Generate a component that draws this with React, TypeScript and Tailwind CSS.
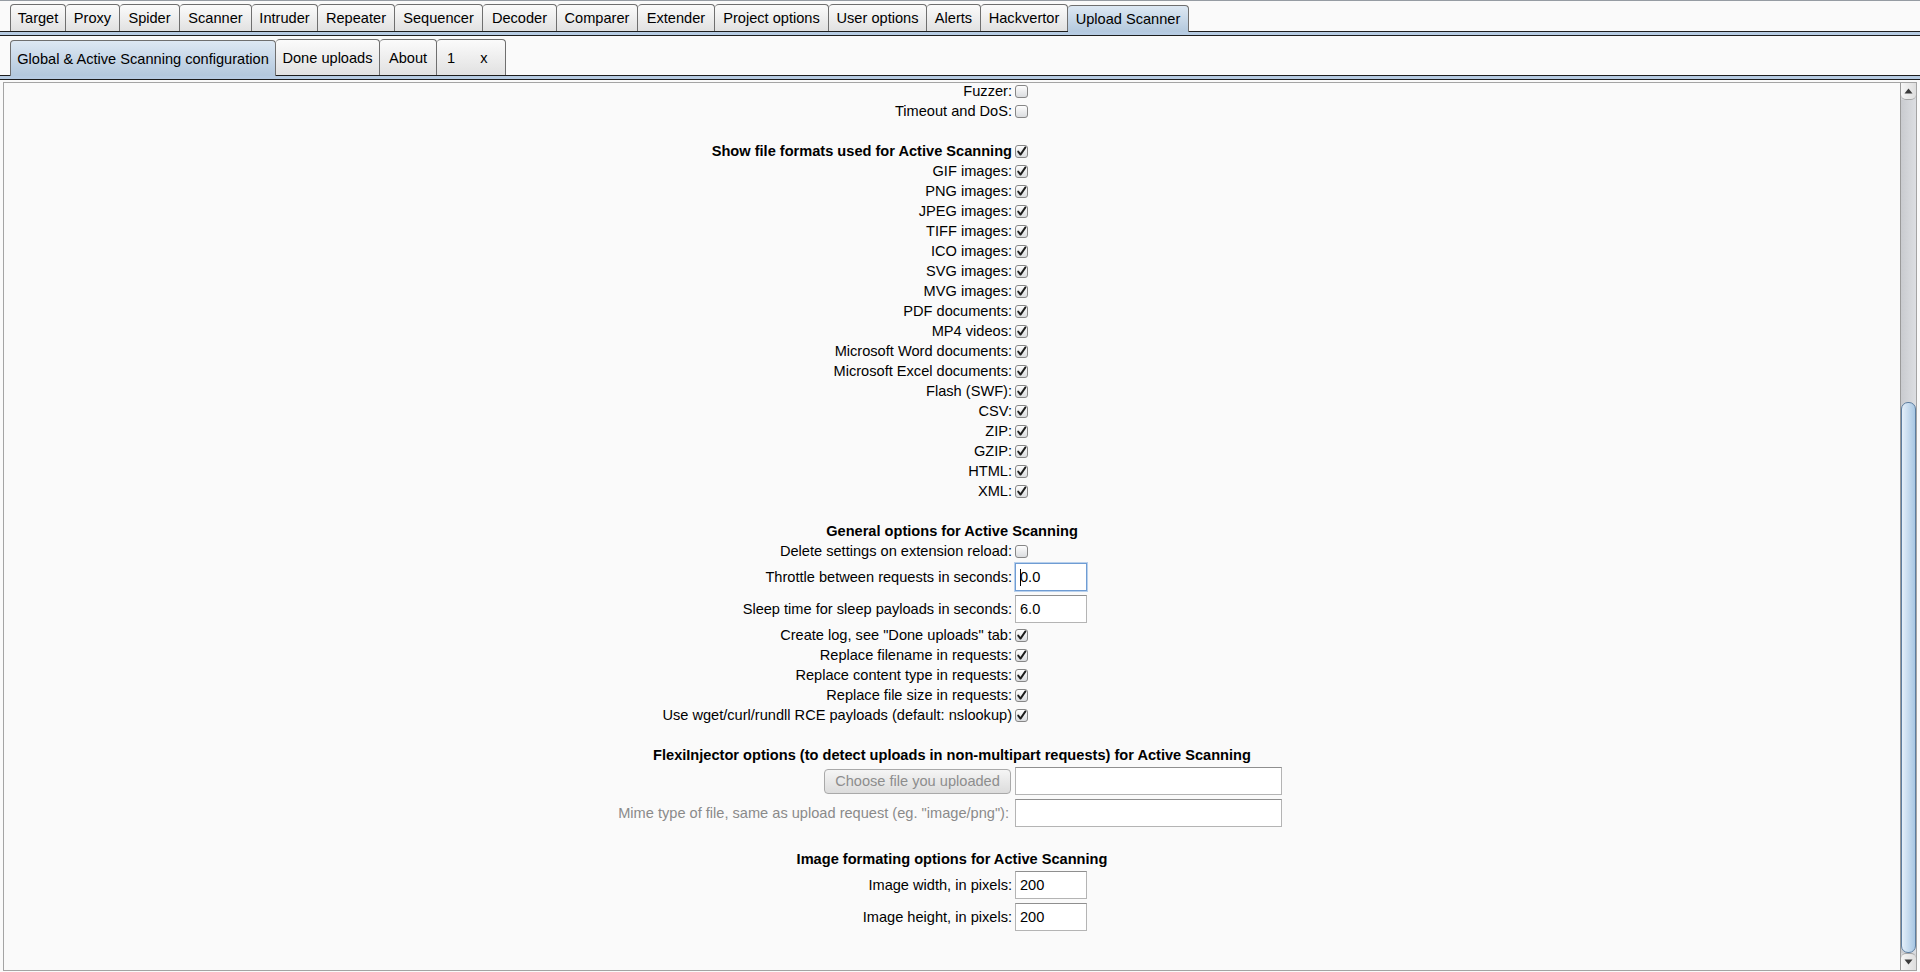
import React from "react";

type Row =
  | { kind: "check"; label: string; checked: boolean; bold?: boolean }
  | { kind: "blank" }
  | { kind: "header"; label: string }
  | { kind: "field"; label: string; value: string; focused?: boolean }
  | { kind: "file" }
  | { kind: "mime" };

const TOP_TABS = [
  { label: "Target", w: "w-[56px]" },
  { label: "Proxy", w: "w-[54px]" },
  { label: "Spider", w: "w-[60px]" },
  { label: "Scanner", w: "w-[72px]" },
  { label: "Intruder", w: "w-[66px]" },
  { label: "Repeater", w: "w-[77px]" },
  { label: "Sequencer", w: "w-[88px]" },
  { label: "Decoder", w: "w-[74px]" },
  { label: "Comparer", w: "w-[81px]" },
  { label: "Extender", w: "w-[77px]" },
  { label: "Project options", w: "w-[114px]" },
  { label: "User options", w: "w-[98px]" },
  { label: "Alerts", w: "w-[54px]" },
  { label: "Hackvertor", w: "w-[87px]" },
  { label: "Upload Scanner", w: "w-[121px]", active: true },
];

const SUB_TABS = [
  { label: "Global & Active Scanning configuration", w: "w-[266px]", active: true },
  { label: "Done uploads", w: "w-[104px]" },
  { label: "About", w: "w-[57px]" },
];

const FORMATS = [
  "GIF images:",
  "PNG images:",
  "JPEG images:",
  "TIFF images:",
  "ICO images:",
  "SVG images:",
  "MVG images:",
  "PDF documents:",
  "MP4 videos:",
  "Microsoft Word documents:",
  "Microsoft Excel documents:",
  "Flash (SWF):",
  "CSV:",
  "ZIP:",
  "GZIP:",
  "HTML:",
  "XML:",
];

const ROWS: Row[] = [
  { kind: "check", label: "Fuzzer:", checked: false },
  { kind: "check", label: "Timeout and DoS:", checked: false },
  { kind: "blank" },
  { kind: "check", label: "Show file formats used for Active Scanning", checked: true, bold: true },
  ...FORMATS.map((f) => ({ kind: "check" as const, label: f, checked: true })),
  { kind: "blank" },
  { kind: "header", label: "General options for Active Scanning" },
  { kind: "check", label: "Delete settings on extension reload:", checked: false },
  { kind: "field", label: "Throttle between requests in seconds:", value: "0.0", focused: true },
  { kind: "field", label: "Sleep time for sleep payloads in seconds:", value: "6.0" },
  { kind: "check", label: 'Create log, see "Done uploads" tab:', checked: true },
  { kind: "check", label: "Replace filename in requests:", checked: true },
  { kind: "check", label: "Replace content type in requests:", checked: true },
  { kind: "check", label: "Replace file size in requests:", checked: true },
  { kind: "check", label: "Use wget/curl/rundll RCE payloads (default: nslookup)", checked: true },
  { kind: "blank" },
  { kind: "header", label: "FlexiInjector options (to detect uploads in non-multipart requests) for Active Scanning" },
  { kind: "file" },
  { kind: "mime" },
  { kind: "blank" },
  { kind: "header", label: "Image formating options for Active Scanning" },
  { kind: "field", label: "Image width, in pixels:", value: "200" },
  { kind: "field", label: "Image height, in pixels:", value: "200" },
];

function Tab({
  label,
  w,
  h,
  active,
  first,
  children,
}: {
  label?: string;
  w: string;
  h: string;
  active?: boolean;
  first?: boolean;
  children?: React.ReactNode;
}) {
  return (
    <div
      className={`${w} ${h} shrink-0 flex items-center justify-center whitespace-nowrap border-t border-r border-[#6f6f6f] rounded-t-[4px] ${
        first ? "border-l" : ""
      } ${
        active
          ? "relative z-10 -mb-px bg-linear-to-b from-[#dde8f3] to-[#b3c8dd]"
          : "bg-linear-to-b from-[#fbfbfb] to-[#e1e1e1]"
      }`}
    >
      {children ?? label}
    </div>
  );
}

function CheckBox({ checked }: { checked: boolean }) {
  return (
    <svg width="13" height="13" viewBox="0 0 13 13" className="shrink-0">
      <defs>
        <linearGradient id="cbfill" x1="0" y1="0" x2="0" y2="1">
          <stop offset="0" stopColor="#ffffff" />
          <stop offset="1" stopColor="#d9dbde" />
        </linearGradient>
      </defs>
      <rect x="0.5" y="0.5" width="12" height="12" rx="2.5" fill="url(#cbfill)" stroke="#868686" />
      {checked && (
        <path
          d="M3.2 6.6 L5.5 9.6 L10.4 2.4"
          fill="none"
          stroke="#1c1c1c"
          strokeWidth="1.9"
          strokeLinecap="round"
          strokeLinejoin="round"
        />
      )}
    </svg>
  );
}

function TextField({ value, focused, wide }: { value: string; focused?: boolean; wide?: boolean }) {
  return (
    <div
      className={`${wide ? "w-[267px]" : "w-[72px]"} h-[28px] ml-px flex items-center pl-[4px] bg-white border ${
        focused
          ? "border-[#6f9cd3] shadow-[0_0_0_1px_#b8d0ec]"
          : "border-[#b4b4b4] border-t-[#8f8f8f]"
      }`}
    >
      {focused && <span className="w-px h-[17px] bg-black" />}
      <span className={focused ? "-ml-px" : ""}>{value}</span>
    </div>
  );
}

function Label({ children, bold, muted, pr }: { children: React.ReactNode; bold?: boolean; muted?: boolean; pr?: string }) {
  return (
    <div
      className={`flex items-center justify-end whitespace-nowrap ${pr ?? "pr-[2px]"} ${bold ? "font-bold" : ""} ${
        muted ? "text-[#8a8a8a]" : "text-black"
      }`}
    >
      {children}
    </div>
  );
}

function ScrollArrow({ up }: { up?: boolean }) {
  return (
    <div
      className={`h-[17px] shrink-0 flex items-center justify-center bg-linear-to-r from-[#f6f6f6] to-[#dedede] ${
        up ? "border-b border-[#a5a5a5] rounded-b-[5px]" : "border-t border-[#a5a5a5] rounded-t-[5px]"
      }`}
    >
      <svg width="9" height="6" viewBox="0 0 9 6">
        <path d={up ? "M4.5 0.5 L8.5 5.5 L0.5 5.5 Z" : "M0.5 0.5 L8.5 0.5 L4.5 5.5 Z"} fill="#3a3a3a" />
      </svg>
    </div>
  );
}

export default function App() {
  return (
    <div className="w-[1920px] h-[972px] flex flex-col bg-[#fafafa] text-[14.6px] leading-[20px] text-black font-['Liberation_Sans',Arial,sans-serif] overflow-hidden">
      {/* top gray rule */}
      <div className="h-px shrink-0 bg-[#969ca3]" />

      {/* main tool tabs */}
      <div className="flex items-end pl-[10px] pt-[3px] shrink-0">
        {TOP_TABS.map((t, i) => (
          <Tab key={t.label} label={t.label} w={t.w} h="h-[27px]" active={t.active} first={i === 0} />
        ))}
      </div>
      <div className="h-[5px] shrink-0 border-y border-[#1d1d1d] bg-[#b6cbe2]" />

      {/* extension sub tabs */}
      <div className="flex items-end pl-[10px] pt-[3px] shrink-0">
        {SUB_TABS.map((t, i) => (
          <Tab key={t.label} label={t.label} w={t.w} h="h-[36px]" active={t.active} first={i === 0} />
        ))}
        <Tab w="w-[69px]" h="h-[36px]">
          <div className="w-full flex items-center pl-[10px] gap-[25px]">
            <span>1</span>
            <span>x</span>
          </div>
        </Tab>
      </div>
      <div className="h-[5px] shrink-0 border-y border-[#1d1d1d] bg-[#b6cbe2]" />

      {/* scroll pane */}
      <div className="flex-1 min-h-0 mt-[2px] mb-px mx-[3px] flex border border-[#a4a4a4]">
        <div className="flex-1 min-w-0 overflow-hidden">
          <div className="-mt-[2px] grid grid-cols-[392px_268px] justify-center">
            {ROWS.map((r, i) => {
              if (r.kind === "blank") return <div key={i} className="col-span-2 h-[20px]" />;
              if (r.kind === "header")
                return (
                  <div key={i} className="col-span-2 h-[20px] flex items-center justify-center font-bold whitespace-nowrap">
                    {r.label}
                  </div>
                );
              if (r.kind === "check")
                return (
                  <React.Fragment key={i}>
                    <div className="h-[20px] flex justify-end">
                      <Label bold={r.bold}>{r.label}</Label>
                    </div>
                    <div className="h-[20px] flex items-center pl-px">
                      <CheckBox checked={r.checked} />
                    </div>
                  </React.Fragment>
                );
              if (r.kind === "field")
                return (
                  <React.Fragment key={i}>
                    <div className="h-[32px] flex justify-end">
                      <Label>{r.label}</Label>
                    </div>
                    <div className="h-[32px] flex items-center">
                      <TextField value={r.value} focused={r.focused} />
                    </div>
                  </React.Fragment>
                );
              if (r.kind === "file")
                return (
                  <React.Fragment key={i}>
                    <div className="h-[32px] flex items-center justify-end pr-[3px]">
                      <div className="w-[187px] h-[25px] flex items-center justify-center rounded-[4px] border border-[#a9a9a9] bg-linear-to-b from-[#f5f5f5] to-[#dcdcdc] text-[#8d8d8d] whitespace-nowrap">
                        Choose file you uploaded
                      </div>
                    </div>
                    <div className="h-[32px] flex items-center">
                      <TextField value="" wide />
                    </div>
                  </React.Fragment>
                );
              return (
                <React.Fragment key={i}>
                  <div className="h-[32px] flex justify-end">
                    <Label muted pr="pr-[5px]">Mime type of file, same as upload request (eg. &quot;image/png&quot;):</Label>
                  </div>
                  <div className="h-[32px] flex items-center">
                    <TextField value="" wide />
                  </div>
                </React.Fragment>
              );
            })}
          </div>
        </div>

        {/* vertical scrollbar */}
        <div className="w-[16px] shrink-0 flex flex-col border-l border-[#9a9a9a] bg-[#d6d8dc]">
          <ScrollArrow up />
          <div className="flex-1 min-h-0 flex flex-col pt-[302px] bg-linear-to-r from-[#c9cbcf] to-[#dcdee2]">
            <div className="flex-1 rounded-[7px] border border-[#5d7ea0] bg-linear-to-r from-[#e4eff9] to-[#a8c7e3]" />
          </div>
          <ScrollArrow />
        </div>
      </div>
    </div>
  );
}
